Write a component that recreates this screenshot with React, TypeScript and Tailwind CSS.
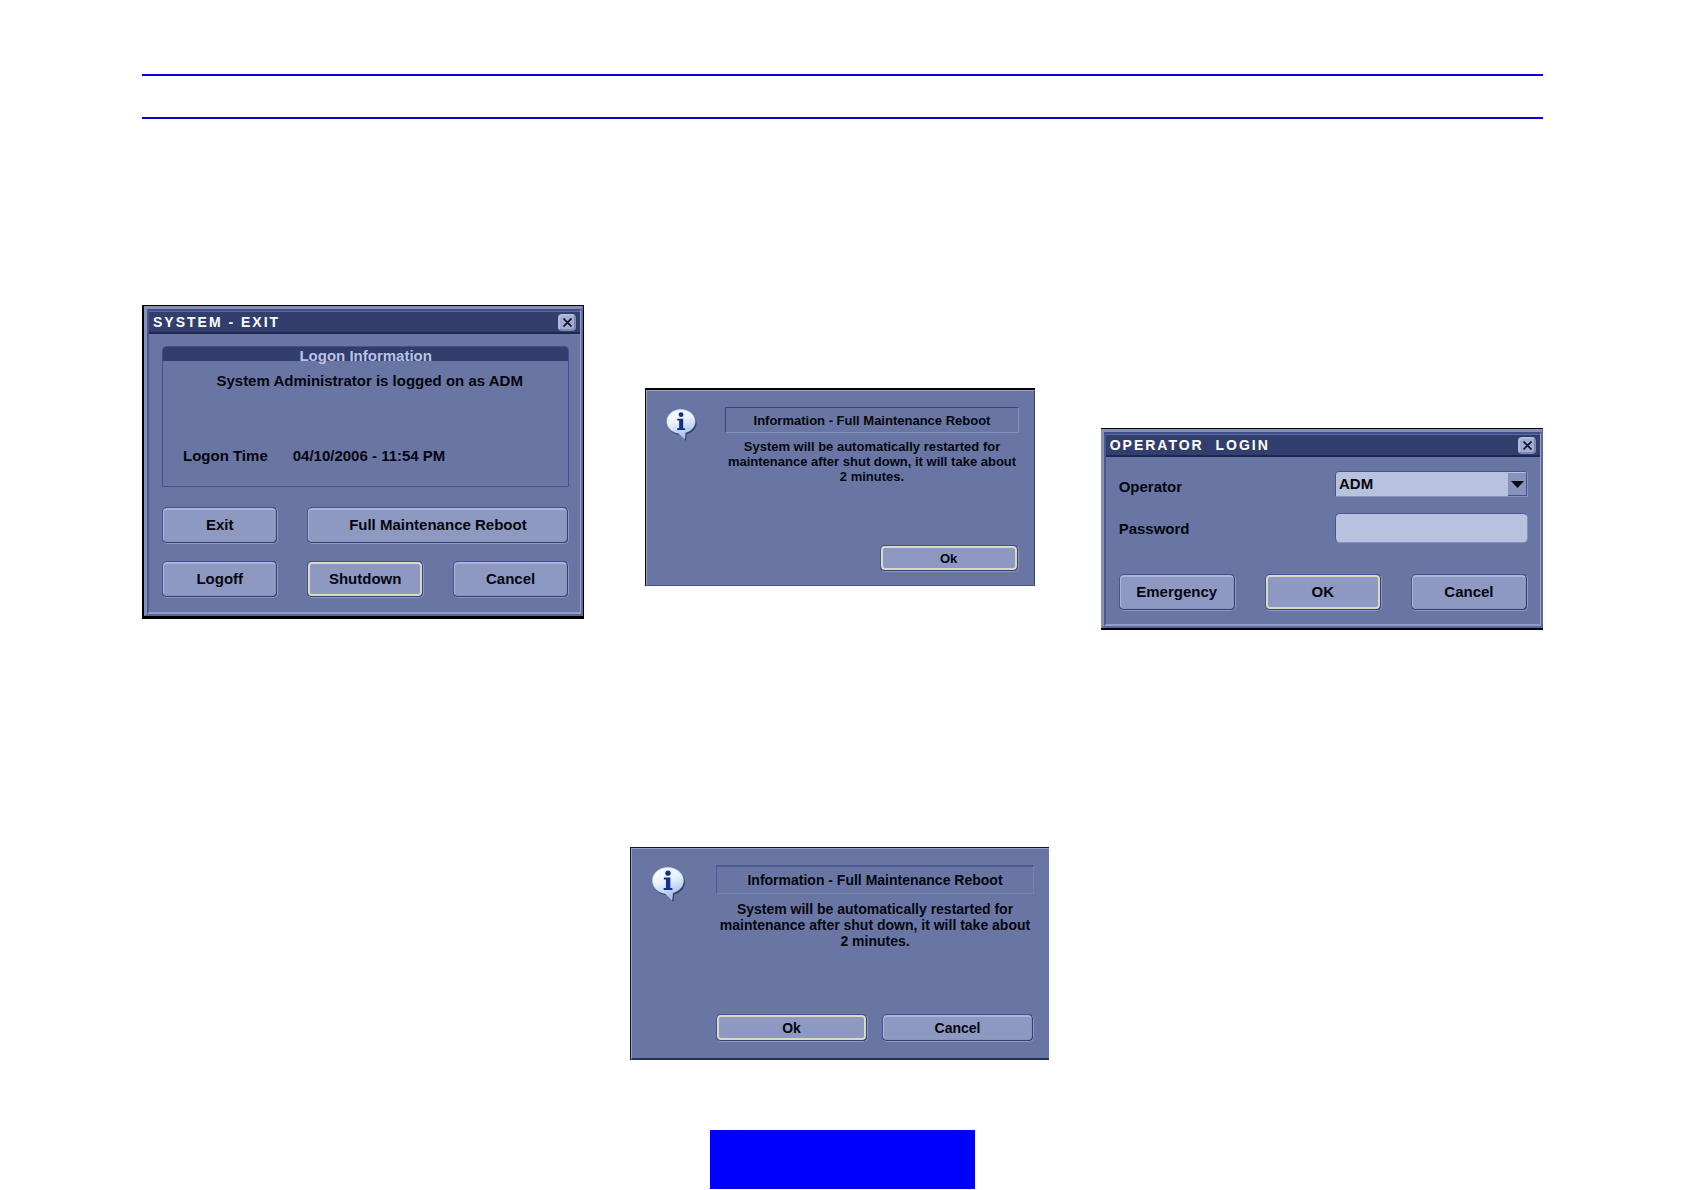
import type { ReactNode } from "react";

function CloseButton() {
  return (
    <button
      type="button"
      aria-label="Close"
      className="flex h-[17px] w-[18px] items-center justify-center rounded-[4px] border-2 border-t-[#b4bcdd] border-l-[#b4bcdd] border-r-[#7c88b6] border-b-[#7c88b6] bg-[#a3acd0]"
    >
      <svg className="h-[9px] w-[9px]" viewBox="0 0 9 9" fill="none" stroke="#10142a" strokeWidth={1.7}>
        <path d="M0.5 0.5l8 8M8.5 0.5l-8 8" />
      </svg>
    </button>
  );
}

function DialogButton({
  children,
  focused = false,
  size = "h-[37px] text-[15px]",
}: {
  children: ReactNode;
  focused?: boolean;
  size?: string;
}) {
  return (
    <button
      type="button"
      className={`${size} w-full rounded-[5px] border border-t-[#46528a] border-l-[#4a568c] border-r-[#8d99c6] border-b-[#8d99c6] bg-[#34416f] pr-px pb-px font-bold text-[#05070f]`}
    >
      <span
        className={
          focused
            ? "flex h-full items-center justify-center rounded-[4px] border-2 border-[#d9d9c4] bg-[#8e99c2]"
            : "flex h-full items-center justify-center rounded-[4px] border border-t-2 border-t-[#a9b5de] border-l-[#a9b5de] border-r-[#8893be] border-b-[#8893be] bg-[#8e99c2]"
        }
      >
        {children}
      </span>
    </button>
  );
}

/* Bevelled window with a title bar */
function Window({
  title,
  edge,
  children,
}: {
  title: string;
  edge: string;
  children: ReactNode;
}) {
  return (
    <div className={`${edge} border-black`}>
      <div className="border-2 border-t-3 border-l-3 border-t-[#8790b9] border-l-[#8790b9] border-r-[#5f6b9f] border-b-[#5a679d]">
        <div className="border-2 border-r border-t-[#414f88] border-l-[#4a5790] border-r-[#97a2cd] border-b-[#929dca] bg-[#6976a4]">
          <header className="flex h-[23px] items-center justify-between border-t border-b-2 border-t-[#5d6ba3] border-b-[#1d2750] bg-[#323f6e] pr-1 pl-1">
            <h2 className="text-[14px] leading-none font-bold tracking-[2px] whitespace-pre text-white">
              {title}
            </h2>
            <CloseButton />
          </header>
          {children}
        </div>
      </div>
    </div>
  );
}

function InfoIcon({ className }: { className: string }) {
  return (
    <svg className={className} viewBox="0 0 32 34" role="img" aria-label="Information">
      <defs>
        <linearGradient id="bubble" x1="0" y1="0" x2="0.4" y2="1">
          <stop offset="0" stopColor="#ffffff" />
          <stop offset="0.5" stopColor="#e9f2fd" />
          <stop offset="1" stopColor="#a3c0ea" />
        </linearGradient>
      </defs>
      <path
        d="M16.5 2C25 2 32 7.500 32 14.800c0 6-4.500 10.400-10.500 12L20.800 34l-7-6.700C6 26.500 1.500 21 1.500 14.800 1.500 7.500 8 2 16.500 2z"
        fill="#33426f"
      />
      <path
        d="M15.200 0.500C23.500 0.500 30.500 6 30.500 13c0 6-4.200 10.300-10.500 12L19.300 32l-6.500-6.300C5.500 24.800 0.500 19.500 0.500 13 0.500 6 7 0.500 15.200 0.500z"
        fill="url(#bubble)"
        stroke="#c9daf3"
        strokeWidth={0.6}
      />
      <circle cx="15.500" cy="6" r="2.600" fill="#12308f" />
      <path d="M11.500 10.300h6.300v10.200h2v1.800h-8.500v-1.800h2.200v-8.400h-2z" fill="#12308f" />
    </svg>
  );
}

function RebootMessage() {
  return (
    <>
      System will be automatically restarted for
      <br />
      maintenance after shut down, it will take about
      <br />
      2 minutes.
    </>
  );
}

function ExitDialog() {
  return (
    <Window title="SYSTEM - EXIT" edge="border border-l-2 border-b-3">
      <div className="pt-3 pr-[11px] pb-[14px] pl-[13px]">
        <section className="rounded-t-[4px] border border-[#46538a]">
          <h3 className="flex h-[14px] justify-center rounded-t-[3px] bg-[#323f6e] text-[15px] leading-[18px] font-bold text-[#b9c2e6]">
            Logon Information
          </h3>
          <p className="pt-[10px] pl-2 text-center leading-5">
            System Administrator is logged on as ADM
          </p>
          <dl className="mt-[55px] flex gap-[25px] pb-[20px] pl-5 leading-5">
            <dt>Logon Time</dt>
            <dd>04/10/2006 - 11:54 PM</dd>
          </dl>
        </section>
        <div className="mt-5 grid grid-cols-3 gap-x-[29px] gap-y-[17px]">
          <DialogButton>Exit</DialogButton>
          <div className="col-span-2">
            <DialogButton>Full Maintenance Reboot</DialogButton>
          </div>
          <DialogButton>Logoff</DialogButton>
          <DialogButton focused>Shutdown</DialogButton>
          <DialogButton>Cancel</DialogButton>
        </div>
      </div>
    </Window>
  );
}

function LoginDialog() {
  return (
    <Window title="OPERATOR  LOGIN" edge="border-t border-b-2">
      <form className="pt-[14px] pr-3 pb-[13px] pl-[13px]">
        <div className="flex justify-between">
          <label htmlFor="operator" className="pt-[6px] leading-5">
            Operator
          </label>
          <div className="relative w-[193px]">
            <select
              id="operator"
              className="block h-[26px] w-full appearance-none rounded-t-[4px] border border-t-[#4a578c] border-l-[#4a578c] border-r-[#8490bd] border-b-[#8490bd] bg-[#b8c1dd] pl-[3px] leading-5 font-bold text-[#05070f]"
            >
              <option>ADM</option>
            </select>
            <span className="pointer-events-none absolute top-[2px] right-px flex h-[23px] w-[19px] items-center justify-center border-r border-b border-[#46538a] bg-[#8792be]">
              <svg className="h-[7px] w-[13px]" viewBox="0 0 13 7">
                <path d="M0 0h13L6.500 7z" fill="#05070f" />
              </svg>
            </span>
          </div>
        </div>
        <div className="mt-[16px] flex justify-between">
          <label htmlFor="password" className="pt-[6px] leading-5">
            Password
          </label>
          <input
            id="password"
            type="password"
            className="h-[30px] w-[193px] rounded-[5px] border border-t-[#4a578c] border-l-[#4a578c] border-r-[#8490bd] border-b-[#8490bd] bg-[#b8c1dd] px-1"
          />
        </div>
        <div className="mt-[31px] grid grid-cols-3 gap-x-[29px]">
          <DialogButton>Emergency</DialogButton>
          <DialogButton focused>OK</DialogButton>
          <DialogButton>Cancel</DialogButton>
        </div>
      </form>
    </Window>
  );
}

function RebootNotice() {
  return (
    <div className="border-t-2 border-l border-black">
      <div className="flex border border-t-[#98a1c5] border-l-[#98a1c5] border-r-[#35427a] border-b-[#46538a] bg-[#6976a4] pt-4 pr-[15px] pb-[13px] pl-[19px] text-[13px] leading-[15px]">
        <InfoIcon className="mt-[2px] h-[32px] w-[31px] shrink-0" />
        <div className="ml-[28px] flex-1">
          <h3 className="border border-t-[#3a477c] border-l-[#3a477c] border-r-[#8490bc] border-b-[#8490bc] pt-[5px] pb-[4px] text-center leading-[15px]">
            Information - Full Maintenance Reboot
          </h3>
          <p className="mt-[6px] text-center whitespace-nowrap">
            <RebootMessage />
          </p>
          <div className="mt-[61px] ml-auto w-[139px]">
            <DialogButton focused size="h-[27px] text-[13px]">
              Ok
            </DialogButton>
          </div>
        </div>
      </div>
    </div>
  );
}

function RebootConfirm() {
  return (
    <div className="border-t border-l border-[#10152c]">
      <div className="flex border border-r-0 border-b-2 border-t-[#98a1c5] border-l-[#98a1c5] border-b-[#27335f] bg-[#6976a4] pt-4 pr-[15px] pb-[16px] pl-[20px] text-[14px] leading-4">
        <InfoIcon className="mt-[2px] h-[35px] w-[33px] shrink-0" />
        <div className="ml-[31px] flex-1">
          <h3 className="border border-t-2 border-t-[#4d5a90] border-l-[#4d5a90] border-r-[#7682b1] border-b-[#7682b1] pt-[5px] pb-[5px] text-center leading-4">
            Information - Full Maintenance Reboot
          </h3>
          <p className="mt-[7px] text-center whitespace-nowrap">
            <RebootMessage />
          </p>
          <div className="mt-[65px] grid grid-cols-2 gap-x-[14px]">
            <DialogButton focused size="h-[28px] text-[14px]">
              Ok
            </DialogButton>
            <DialogButton size="h-[28px] text-[14px]">Cancel</DialogButton>
          </div>
        </div>
      </div>
    </div>
  );
}

export default function App() {
  return (
    <main className="bg-white pt-[74px] pr-[141px] pl-[142px] font-['Liberation_Sans',Arial,sans-serif] text-[15px] font-bold text-[#05070f]">
      <div className="h-[45px] border-y-2 border-[#0a00d0]" />

      <div className="mt-[186px] flex items-start">
        <div className="flex-[442]">
          <ExitDialog />
        </div>
        <div className="mt-[83px] ml-[61px] flex-[389]">
          <RebootNotice />
        </div>
        <div className="mt-[123px] ml-[66px] flex-[442]">
          <LoginDialog />
        </div>
      </div>

      <div className="mt-[217px] flex justify-center pr-[6px]">
        <div className="w-[419px]">
          <RebootConfirm />
        </div>
      </div>

      <div className="mx-auto mt-[70px] h-[59px] w-[265px] bg-[#0000ff]" />
    </main>
  );
}
